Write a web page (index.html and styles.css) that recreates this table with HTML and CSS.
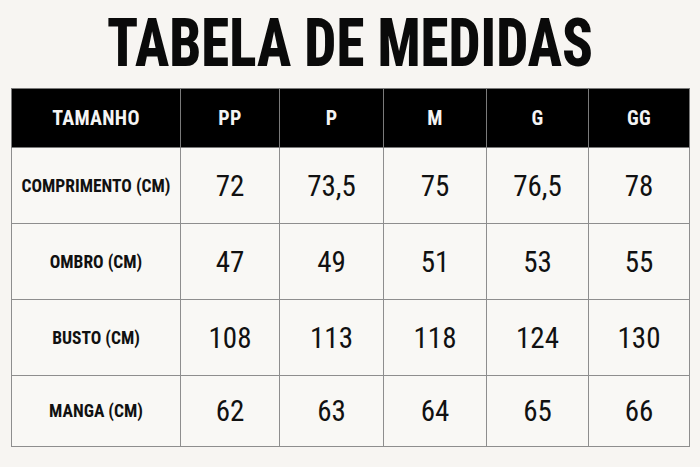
FILE: index.html
```html
<!DOCTYPE html>
<html lang="pt-BR">
<head>
<meta charset="utf-8">
<title>Tabela de Medidas</title>
<link rel="stylesheet" href="styles.css">
</head>
<body>
<main class="page">
  <h1 class="title">TABELA DE MEDIDAS</h1>
  <table class="sizes">
    <colgroup>
      <col class="col-label">
      <col class="col-pp">
      <col class="col-p">
      <col class="col-m">
      <col class="col-g">
      <col class="col-gg">
    </colgroup>
    <thead>
      <tr>
        <th>TAMANHO</th>
        <th>PP</th>
        <th>P</th>
        <th>M</th>
        <th>G</th>
        <th>GG</th>
      </tr>
    </thead>
    <tbody>
      <tr>
        <th>COMPRIMENTO (CM)</th>
        <td>72</td><td>73,5</td><td>75</td><td>76,5</td><td>78</td>
      </tr>
      <tr>
        <th>OMBRO (CM)</th>
        <td>47</td><td>49</td><td>51</td><td>53</td><td>55</td>
      </tr>
      <tr>
        <th>BUSTO (CM)</th>
        <td>108</td><td>113</td><td>118</td><td>124</td><td>130</td>
      </tr>
      <tr class="last">
        <th>MANGA (CM)</th>
        <td>62</td><td>63</td><td>64</td><td>65</td><td>66</td>
      </tr>
    </tbody>
  </table>
</main>
</body>
</html>
```
FILE: styles.css
```css
html, body {
  margin: 0;
  padding: 0;
  background: #f7f5f2;
}

body {
  font-family: Roboto, "Open Sans", sans-serif;
  font-stretch: 75%;
  color: #111;
}

.page {
  padding: 10px 11px 0;
}

.title {
  margin: 0 0 11px;
  font-size: 67px;
  line-height: 67px;
  font-weight: 800;
  text-align: center;
  white-space: nowrap;
  color: #0a0a0a;
  transform: scaleX(0.85);
}

.sizes {
  width: 678px;
  table-layout: fixed;
  border-collapse: collapse;
  background: #f9f8f5;
}

.col-label { width: 169px; }
.col-pp { width: 99px; }
.col-p { width: 104px; }
.col-m { width: 103px; }
.col-g { width: 102px; }
.col-gg { width: 101px; }

.sizes th,
.sizes td {
  border: 1px solid #8e8e8e;
  padding: 0;
  text-align: center;
  vertical-align: middle;
  white-space: nowrap;
}

.sizes thead th {
  height: 58px;
  background: #000;
  color: #f4f4f4;
  font-size: 20px;
  font-weight: 700;
  letter-spacing: 0.3px;
  border-color: #7a7a7a;
}

.sizes tbody tr {
  height: 76px;
}

.sizes tbody tr.last {
  height: 71px;
}

.sizes tbody th {
  font-size: 17.5px;
  font-weight: 700;
  color: #111;
}

.sizes tbody td {
  font-size: 29px;
  font-weight: 400;
  color: #111;
}
```
